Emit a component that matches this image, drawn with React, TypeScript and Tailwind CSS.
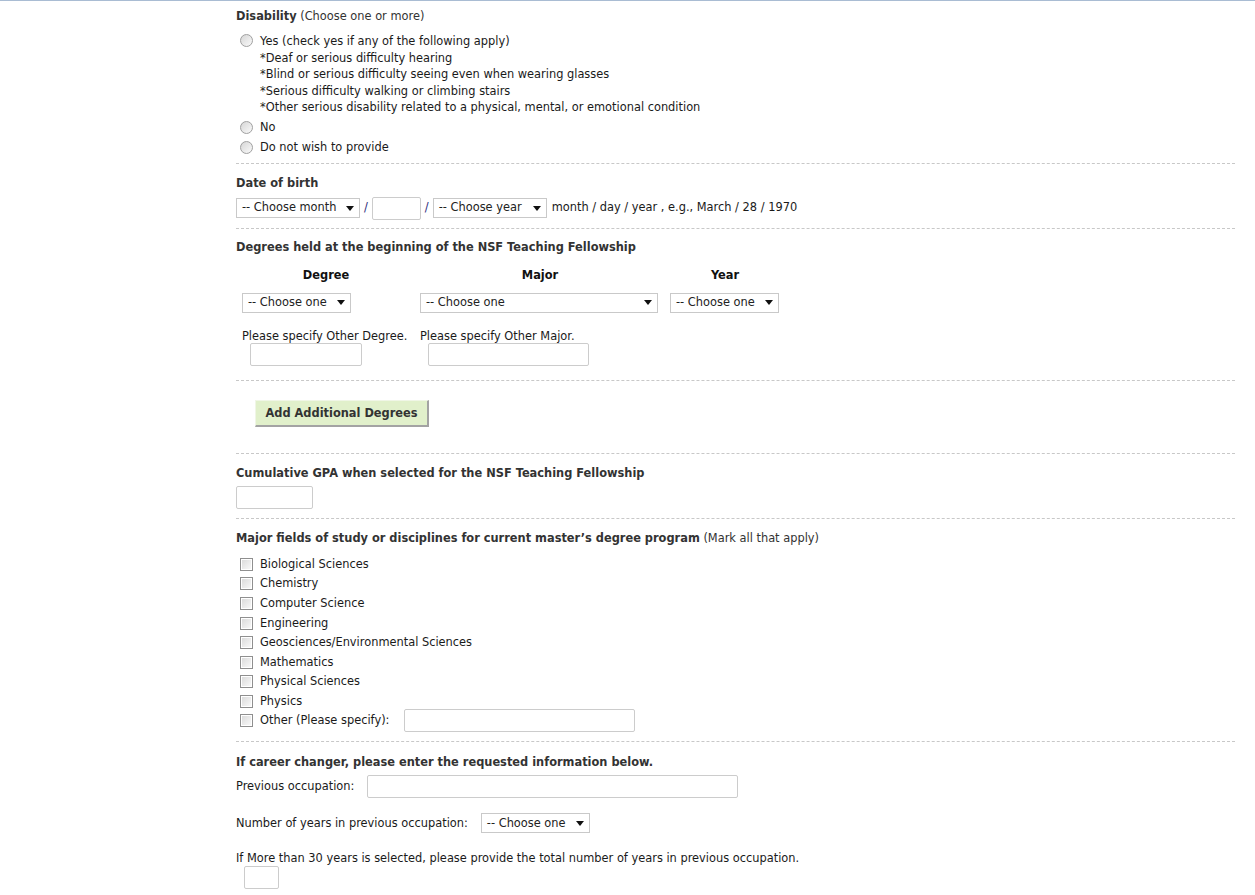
import React from "react";

const font = { fontFamily: '"DejaVu Sans", Verdana, sans-serif' };

function Radio() {
  return (
    <span className="inline-block w-[13px] h-[13px] rounded-full border border-[#a0a0a0] bg-gradient-to-br from-[#d6d6d6] to-[#fafafa] shrink-0" />
  );
}

function Checkbox() {
  return (
    <span className="inline-flex items-center justify-center w-[13px] h-[13px] border border-[#8f8f8f] bg-white shrink-0">
      <span className="block w-[9px] h-[9px] bg-gradient-to-br from-[#dcdcdc] to-[#f8f8f8]" />
    </span>
  );
}

type SelectProps = { label: string; width: string };

function FakeSelect({ label, width }: SelectProps) {
  return (
    <span
      className={`inline-flex items-center justify-between h-[20px] border border-[#c9c9c9] bg-white pl-[5px] pr-[5px] text-[#222] leading-none ${width}`}
    >
      <span>{label}</span>
      <svg width="8" height="5" viewBox="0 0 8 5">
        <path d="M0 0h8L4 5z" fill="#111" />
      </svg>
    </span>
  );
}

function TextBox({ width }: { width: string }) {
  return (
    <span
      className={`inline-block align-top h-[23px] border border-[#cccccc] rounded-[2px] bg-white ${width}`}
    />
  );
}

function Section({
  children,
  className,
}: {
  children: React.ReactNode;
  className?: string;
}) {
  return (
    <div className={`border-b border-dashed border-[#c8c8c8] ${className ?? ""}`}>
      {children}
    </div>
  );
}

const disabilityItems = [
  "*Deaf or serious difficulty hearing",
  "*Blind or serious difficulty seeing even when wearing glasses",
  "*Serious difficulty walking or climbing stairs",
  "*Other serious disability related to a physical, mental, or emotional condition",
];

const fields = [
  "Biological Sciences",
  "Chemistry",
  "Computer Science",
  "Engineering",
  "Geosciences/Environmental Sciences",
  "Mathematics",
  "Physical Sciences",
  "Physics",
];

export default function App() {
  return (
    <div
      className="w-full min-h-[895px] bg-white border-t border-[#a9bcd3] text-[11.4px] text-[#1a1a1a]"
      style={font}
    >
      <div className="ml-[236px] w-[999px]">
        {/* Disability */}
        <Section className="pt-[8px] pb-[7px]">
          <div className="h-[15px] leading-[15px] text-[#333]">
            <span className="font-bold">Disability</span> (Choose one or more)
          </div>
          <div className="mt-[10px] flex gap-[7px] pl-[4px]">
            <Radio />
            <div className="leading-[16.5px] -mt-[1px]">
              <div>Yes (check yes if any of the following apply)</div>
              {disabilityItems.map((item) => (
                <div key={item}>{item}</div>
              ))}
            </div>
          </div>
          <div className="mt-[4px] flex items-center gap-[7px] pl-[4px] h-[16px]">
            <Radio />
            <span>No</span>
          </div>
          <div className="mt-[4px] flex items-center gap-[7px] pl-[4px] h-[16px]">
            <Radio />
            <span>Do not wish to provide</span>
          </div>
        </Section>

        {/* Date of birth */}
        <Section className="pt-[12px] pb-[8px]">
          <div className="h-[15px] leading-[15px] font-bold text-[#333]">
            Date of birth
          </div>
          <div className="mt-[6px] flex items-center h-[23px]">
            <FakeSelect label="-- Choose month" width="w-[124px]" />
            <span className="mx-[4px] text-[#2c2c7a]">/</span>
            <TextBox width="w-[49px]" />
            <span className="mx-[4px] text-[#2c2c7a]">/</span>
            <FakeSelect label="-- Choose year" width="w-[114px]" />
            <span className="ml-[5px]">month / day / year , e.g., March / 28 / 1970</span>
          </div>
        </Section>

        {/* Degrees */}
        <Section className="pt-[11px] pb-[14px]">
          <div className="h-[15px] leading-[15px] font-bold text-[#333]">
            Degrees held at the beginning of the NSF Teaching Fellowship
          </div>
          <div className="mt-[13px] h-[15px] leading-[15px] grid grid-cols-[178px_250px_122px] font-bold text-[#111]">
            <div className="text-center pl-[2px]">Degree</div>
            <div className="text-center pl-[2px]">Major</div>
            <div className="text-center">Year</div>
          </div>
          <div className="mt-[10px] grid grid-cols-[178px_250px_122px]">
            <div className="pl-[6px]">
              <FakeSelect label="-- Choose one" width="w-[109px]" />
            </div>
            <div className="pl-[6px]">
              <FakeSelect label="-- Choose one" width="w-[238px]" />
            </div>
            <div className="pl-[6px]">
              <FakeSelect label="-- Choose one" width="w-[109px]" />
            </div>
          </div>
          <div className="mt-[16px] grid grid-cols-[178px_250px_122px]">
            <div className="pl-[6px]">
              <div className="leading-[14px]">Please specify Other Degree.</div>
              <div className="pl-[8px] h-[23px]">
                <TextBox width="w-[112px]" />
              </div>
            </div>
            <div className="pl-[6px]">
              <div className="leading-[14px]">Please specify Other Major.</div>
              <div className="pl-[8px] h-[23px]">
                <TextBox width="w-[161px]" />
              </div>
            </div>
            <div />
          </div>
        </Section>

        {/* Add button */}
        <Section className="pt-[19px] pb-[26px]">
          <button className="block ml-[19px] h-[27px] w-[174px] pt-[2px] bg-[#e1f0cb] border-t border-l border-[#f0f6e6] border-r-2 border-b-2 border-r-[#a3a3a3] border-b-[#a3a3a3] font-bold text-[#333] text-[11.4px]">
            Add Additional Degrees
          </button>
        </Section>

        {/* GPA */}
        <Section className="pt-[12px] pb-[9px]">
          <div className="h-[15px] leading-[15px] font-bold text-[#333]">
            Cumulative GPA when selected for the NSF Teaching Fellowship
          </div>
          <div className="mt-[5px] h-[23px]">
            <TextBox width="w-[77px]" />
          </div>
        </Section>

        {/* Major fields */}
        <Section className="pt-[12px] pb-[11px]">
          <div className="h-[15px] leading-[15px] text-[#333]">
            <span className="font-bold">
              Major fields of study or disciplines for current master’s degree program
            </span>{" "}
            (Mark all that apply)
          </div>
          <div className="mt-[9px]">
            {fields.map((f) => (
              <div key={f} className="flex items-center gap-[7px] h-[19.6px] pl-[4px]">
                <Checkbox />
                <span>{f}</span>
              </div>
            ))}
            <div className="flex items-center h-[19px] pl-[4px]">
              <Checkbox />
              <span className="ml-[7px]">Other (Please specify):</span>
              <span className="ml-[15px] h-[23px]">
                <TextBox width="w-[231px]" />
              </span>
            </div>
          </div>
        </Section>

        {/* Career changer */}
        <div className="pt-[13px]">
          <div className="h-[15px] leading-[15px] font-bold text-[#333]">
            If career changer, please enter the requested information below.
          </div>
          <div className="mt-[4px] flex items-center h-[24px]">
            <span>Previous occupation:</span>
            <span className="ml-[13px] h-[23px]">
              <TextBox width="w-[371px]" />
            </span>
          </div>
          <div className="mt-[15px] flex items-center h-[20px]">
            <span>Number of years in previous occupation:</span>
            <span className="ml-[13px]">
              <FakeSelect label="-- Choose one" width="w-[109px]" />
            </span>
          </div>
          <div className="mt-[18px] h-[15px] leading-[15px]">
            If More than 30 years is selected, please provide the total number of years in previous occupation.
          </div>
          <div className="pl-[8px] h-[23px]">
            <TextBox width="w-[35px]" />
          </div>
        </div>
      </div>
    </div>
  );
}
